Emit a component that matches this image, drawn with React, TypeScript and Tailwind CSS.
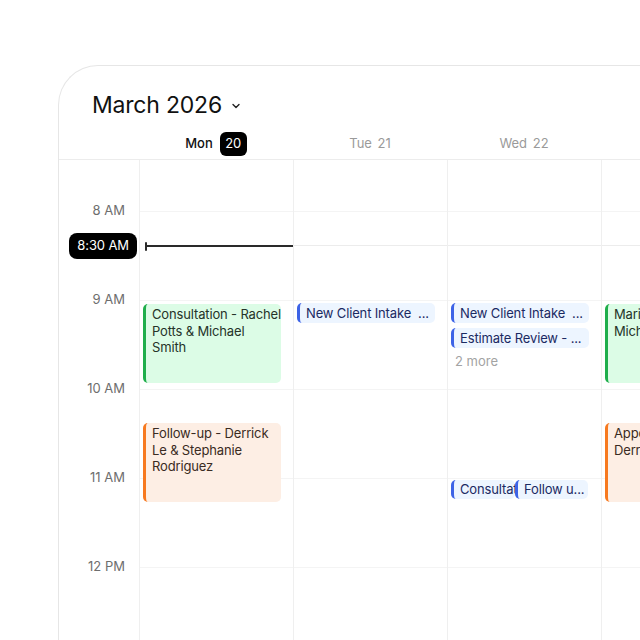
import React from 'react';

type Tone = 'green' | 'orange' | 'blue';

interface CalEvent {
    title: string;
    label?: string;
    top: number;
    height: number;
    tone: Tone;
    left?: number;
    width?: number;
}

const HOUR = 89;
const OFFSET = 51; // body top to the 8 AM line
const NOW = 86; // current time line, from body top

const toneClasses: Record<Tone, string> = {
    green: 'bg-[#dcfce6] border-[#1fae4b] text-[#253329]',
    orange: 'bg-[#fdeee4] border-[#f7791f] text-[#3a2b22]',
    blue: 'bg-[#edf5ff] border-[#3d63e6] text-[#1b2a63]',
};

const days = [
    { name: 'Mon', date: '20', today: true },
    { name: 'Tue', date: '21' },
    { name: 'Wed', date: '22' },
    { name: 'Thu', date: '23' },
];

const columns: { events: CalEvent[]; more?: { label: string; top: number } }[] = [
    {
        events: [
            { title: 'Consultation - Rachel Potts & Michael Smith', top: 144, height: 79, tone: 'green' },
            { title: 'Follow-up - Derrick Le & Stephanie Rodriguez', top: 263, height: 79, tone: 'orange' },
        ],
    },
    {
        events: [{ title: 'New Client Intake - Jordan Blake', label: 'New Client Intake  ...', top: 143, height: 20, tone: 'blue' }],
    },
    {
        events: [
            { title: 'New Client Intake - Priya Shah', label: 'New Client Intake  ...', top: 143, height: 20, tone: 'blue' },
            { title: 'Estimate Review - Tom Hall', label: 'Estimate Review - ...', top: 168, height: 20, tone: 'blue' },
            { title: 'Consultation', label: 'Consultat', top: 320, height: 19, tone: 'blue', left: 3, width: 64 },
            { title: 'Follow up call', label: 'Follow u...', top: 320, height: 19, tone: 'blue', left: 67, width: 73 },
        ],
        more: { label: '2 more', top: 192 },
    },
    {
        events: [
            { title: 'Maria Lopez & Michael Grant', top: 144, height: 79, tone: 'green' },
            { title: 'Appointment - Derrick Lane', top: 263, height: 79, tone: 'orange' },
        ],
    },
];

const hours = ['8 AM', '9 AM', '10 AM', '11 AM', '12 PM'];

const EventCard: React.FC<{ ev: CalEvent }> = ({ ev }) => {
    const small = ev.height < 30;
    return (
        <div
            className={`absolute rounded-[5px] border-l-[3px] pl-[6px] text-[13px] leading-[16.5px] tracking-[-0.15px] overflow-hidden ${toneClasses[ev.tone]} ${small ? 'flex items-center' : 'pt-[2px]'}`}
            style={{ top: ev.top, height: ev.height, left: ev.left ?? 3, width: ev.width ?? 138 }}
        >
            {small ? (
                <span className="whitespace-pre overflow-hidden">{ev.label}</span>
            ) : (
                <span>{ev.title}</span>
            )}
        </div>
    );
};

export default function App() {
    return (
        <div
            className="w-[640px] h-[640px] overflow-hidden bg-white"
            style={{ fontFamily: 'Inter, "Noto Sans", sans-serif' }}
        >
            <div className="ml-[58px] mt-[65px] w-[700px] h-[700px] rounded-tl-[40px] border-l border-t border-[#e6e6e6] bg-white">
                {/* Title */}
                <div className="flex items-center gap-[9px] pl-[33px] pt-[22px] h-[55px]">
                    <span className="text-[23px] leading-[28px] text-[#111] tracking-[-0.2px]">March 2026</span>
                    <svg width="10" height="10" viewBox="0 0 10 10" className="mt-[2px]">
                        <path d="M2 3.5 L5 6.5 L8 3.5" fill="none" stroke="#222" strokeWidth="1.4" strokeLinecap="round" strokeLinejoin="round" />
                    </svg>
                </div>

                {/* Day header */}
                <div className="flex h-[39px] pt-[8px] border-b border-[#ececec]">
                    <div className="w-[80px] shrink-0" />
                    {days.map((d) => (
                        <div key={d.name} className="w-[154px] shrink-0 flex items-center justify-center gap-[7px] text-[13px]">
                            {d.today ? (
                                <>
                                    <span className="font-medium text-[#111]">{d.name}</span>
                                    <span className="bg-black text-white rounded-[6px] w-[27px] h-[24px] flex items-center justify-center">
                                        {d.date}
                                    </span>
                                </>
                            ) : (
                                <span className="text-[#9a9a9a]">
                                    {d.name} <span className="ml-[2px]">{d.date}</span>
                                </span>
                            )}
                        </div>
                    ))}
                </div>

                {/* Body */}
                <div className="flex relative">
                    {/* gutter */}
                    <div className="w-[80px] shrink-0 relative h-[500px] text-[13px] text-[#6e6e6e]">
                        {hours.map((h, i) => (
                            <div
                                key={h}
                                className="absolute right-[14px] -translate-y-1/2"
                                style={{ top: OFFSET + i * HOUR }}
                            >
                                {h}
                            </div>
                        ))}
                        <div
                            className="absolute right-[2px] -translate-y-1/2 bg-black text-white rounded-[8px] h-[26px] px-[8px] flex items-center tracking-[-0.1px]"
                            style={{ top: NOW }}
                        >
                            8:30 AM
                        </div>
                    </div>

                    {columns.map((col, ci) => (
                        <div key={ci} className="w-[154px] shrink-0 relative h-[500px] border-l border-[#efefef]">
                            {hours.map((h, i) => (
                                <div
                                    key={h}
                                    className="absolute left-0 right-0 border-t border-[#f4f4f4]"
                                    style={{ top: OFFSET + i * HOUR }}
                                />
                            ))}
                            <div
                                className={`absolute left-0 right-0 ${ci === 0 ? 'left-[6px] h-[2px] bg-[#2a2a2a]' : 'h-px bg-[#ececec]'}`}
                                style={{ top: NOW - 1 }}
                            />
                            {ci === 0 && (
                                <div
                                    className="absolute left-[5px] w-[2px] h-[9px] bg-[#2a2a2a] rounded-sm"
                                    style={{ top: NOW - 4.5 }}
                                />
                            )}
                            {col.events.map((ev) => (
                                <EventCard key={ev.title} ev={ev} />
                            ))}
                            {col.more && (
                                <div className="absolute left-[7px] text-[13px] text-[#a3a3a3]" style={{ top: col.more.top }}>
                                    {col.more.label}
                                </div>
                            )}
                        </div>
                    ))}
                </div>
            </div>
        </div>
    );
}
